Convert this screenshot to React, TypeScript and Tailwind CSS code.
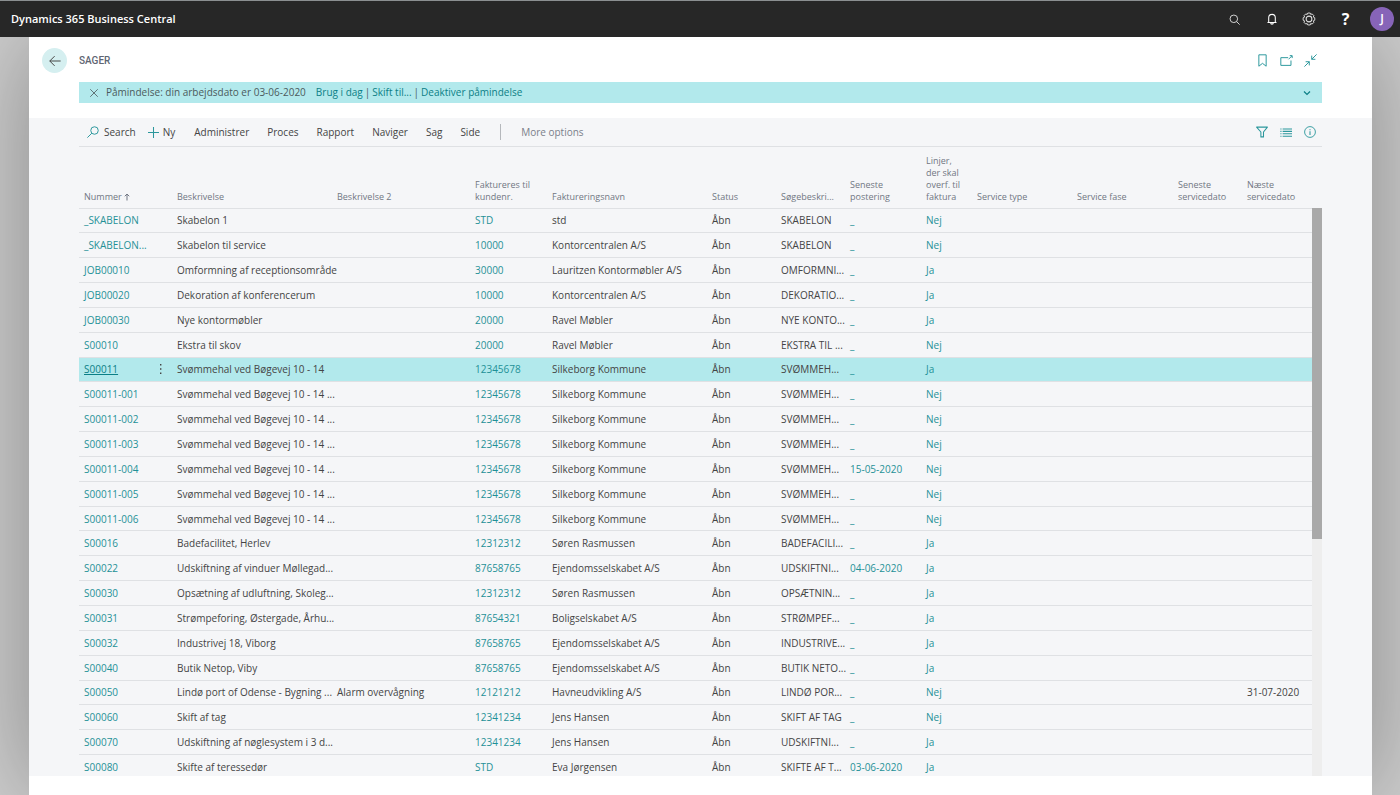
import type { ReactNode } from 'react'

type Row = {
    no: string
    desc: string
    desc2?: string
    customer: string
    name: string
    search: string
    posted?: string
    lines: string
    next?: string
}

const rows: Row[] = [
    { no: '_SKABELON', desc: 'Skabelon 1', customer: 'STD', name: 'std', search: 'SKABELON', lines: 'Nej' },
    { no: '_SKABELON...', desc: 'Skabelon til service', customer: '10000', name: 'Kontorcentralen A/S', search: 'SKABELON', lines: 'Nej' },
    { no: 'JOB00010', desc: 'Omformning af receptionsområde', customer: '30000', name: 'Lauritzen Kontormøbler A/S', search: 'OMFORMNI...', lines: 'Ja' },
    { no: 'JOB00020', desc: 'Dekoration af konferencerum', customer: '10000', name: 'Kontorcentralen A/S', search: 'DEKORATIO...', lines: 'Ja' },
    { no: 'JOB00030', desc: 'Nye kontormøbler', customer: '20000', name: 'Ravel Møbler', search: 'NYE KONTO...', lines: 'Ja' },
    { no: 'S00010', desc: 'Ekstra til skov', customer: '20000', name: 'Ravel Møbler', search: 'EKSTRA TIL ...', lines: 'Nej' },
    { no: 'S00011', desc: 'Svømmehal ved Bøgevej 10 - 14', customer: '12345678', name: 'Silkeborg Kommune', search: 'SVØMMEH...', lines: 'Ja' },
    { no: 'S00011-001', desc: 'Svømmehal ved Bøgevej 10 - 14 ...', customer: '12345678', name: 'Silkeborg Kommune', search: 'SVØMMEH...', lines: 'Nej' },
    { no: 'S00011-002', desc: 'Svømmehal ved Bøgevej 10 - 14 ...', customer: '12345678', name: 'Silkeborg Kommune', search: 'SVØMMEH...', lines: 'Nej' },
    { no: 'S00011-003', desc: 'Svømmehal ved Bøgevej 10 - 14 ...', customer: '12345678', name: 'Silkeborg Kommune', search: 'SVØMMEH...', lines: 'Nej' },
    { no: 'S00011-004', desc: 'Svømmehal ved Bøgevej 10 - 14 ...', customer: '12345678', name: 'Silkeborg Kommune', search: 'SVØMMEH...', posted: '15-05-2020', lines: 'Nej' },
    { no: 'S00011-005', desc: 'Svømmehal ved Bøgevej 10 - 14 ...', customer: '12345678', name: 'Silkeborg Kommune', search: 'SVØMMEH...', lines: 'Nej' },
    { no: 'S00011-006', desc: 'Svømmehal ved Bøgevej 10 - 14 ...', customer: '12345678', name: 'Silkeborg Kommune', search: 'SVØMMEH...', lines: 'Nej' },
    { no: 'S00016', desc: 'Badefacilitet, Herlev', customer: '12312312', name: 'Søren Rasmussen', search: 'BADEFACILI...', lines: 'Ja' },
    { no: 'S00022', desc: 'Udskiftning af vinduer Møllegad...', customer: '87658765', name: 'Ejendomsselskabet A/S', search: 'UDSKIFTNI...', posted: '04-06-2020', lines: 'Ja' },
    { no: 'S00030', desc: 'Opsætning af udluftning, Skoleg...', customer: '12312312', name: 'Søren Rasmussen', search: 'OPSÆTNIN...', lines: 'Ja' },
    { no: 'S00031', desc: 'Strømpeforing, Østergade, Århu...', customer: '87654321', name: 'Boligselskabet A/S', search: 'STRØMPEF...', lines: 'Ja' },
    { no: 'S00032', desc: 'Industrivej 18, Viborg', customer: '87658765', name: 'Ejendomsselskabet A/S', search: 'INDUSTRIVE...', lines: 'Ja' },
    { no: 'S00040', desc: 'Butik Netop, Viby', customer: '87658765', name: 'Ejendomsselskabet A/S', search: 'BUTIK NETO...', lines: 'Ja' },
    { no: 'S00050', desc: 'Lindø port of Odense - Bygning ...', desc2: 'Alarm overvågning', customer: '12121212', name: 'Havneudvikling A/S', search: 'LINDØ POR...', lines: 'Nej', next: '31-07-2020' },
    { no: 'S00060', desc: 'Skift af tag', customer: '12341234', name: 'Jens Hansen', search: 'SKIFT AF TAG', lines: 'Nej' },
    { no: 'S00070', desc: 'Udskiftning af nøglesystem i 3 d...', customer: '12341234', name: 'Jens Hansen', search: 'UDSKIFTNI...', lines: 'Ja' },
    { no: 'S00080', desc: 'Skifte af teressedør', customer: 'STD', name: 'Eva Jørgensen', search: 'SKIFTE AF T...', posted: '03-06-2020', lines: 'Ja' },
]

const selectedNo = 'S00011'

const menu = ['Administrer', 'Proces', 'Rapport', 'Naviger', 'Sag', 'Side']

const Icon = ({ children, className }: { children: ReactNode; className: string }) => (
    <svg viewBox="0 0 16 16" fill="none" stroke="currentColor" className={className} aria-hidden="true">
        {children}
    </svg>
)

const CellLink = ({ children, underline }: { children: ReactNode; underline?: boolean }) => (
    <a href="#" className={underline ? 'text-[#0b7f86] underline' : 'text-[#1f9197]'}>{children}</a>
)

const TopBar = () => (
    <header className="flex h-[37px] shrink-0 items-center justify-between border-t border-[#8b8f91] bg-[#272727] pl-[11px] pr-[6px] text-white">
        <a href="#" className="text-[11px] font-semibold">Dynamics 365 Business Central</a>
        <div className="flex items-center">
            <button type="button" aria-label="Søg" className="flex w-[37px] justify-center text-[#d6d6d6]">
                <Icon className="size-[11px]">
                    <circle cx="7" cy="7" r="5.5" strokeWidth="1.4" />
                    <path d="M11 11 15.5 15.5" strokeWidth="1.4" />
                </Icon>
            </button>
            <button type="button" aria-label="Notifikationer" className="flex w-[37px] justify-center">
                <Icon className="size-3">
                    <path d="M2 12.6h12M3.6 12.4V6.2a4.4 4.4 0 0 1 8.8 0v6.2M6.2 13c0 2.4 3.6 2.4 3.6 0" strokeWidth="1.4" />
                </Icon>
            </button>
            <button type="button" aria-label="Indstillinger" className="flex w-[37px] justify-center text-[#e0e0e0]">
                <Icon className="size-[14px]">
                    <path d="M6.600 1.200h2.800l.6 1.600 1.600-.6 2 2-.7 1.600 1.700.8v2.800l-1.700.7.7 1.700-2 2-1.600-.7-.6 1.700H6.600l-.7-1.700-1.600.7-2-2 .7-1.700-1.700-.7V6.600L3 5.800l-.7-1.600 2-2 1.600.6z" strokeLinejoin="round" strokeWidth="1.100" />
                    <circle cx="8" cy="8" r="3.300" strokeWidth="1.200" />
                </Icon>
            </button>
            <button type="button" aria-label="Hjælp" className="w-[37px] text-center text-base font-bold">?</button>
            <button type="button" aria-label="Konto" className="ml-[6px] size-6 rounded-full bg-[#8764b8] text-xs font-semibold">J</button>
        </div>
    </header>
)

const PageHeader = () => (
    <div className="flex items-center justify-between pl-[13px] pr-[55px] pt-[11px]">
        <div className="flex items-center gap-3">
            <button type="button" aria-label="Tilbage" className="flex size-[25px] items-center justify-center rounded-full bg-[#d5eff0] text-[#444]">
                <Icon className="size-3">
                    <path d="M15.500 8H1M7.500 1.500 1 8l6.500 6.500" strokeWidth="1.300" />
                </Icon>
            </button>
            <h1 className="font-['Roboto',sans-serif] text-[10px] font-medium text-[#5f6673]">SAGER</h1>
        </div>
        <div className="flex items-center gap-[11px] text-[#2b979c]">
            <button type="button" aria-label="Bogmærke">
                <Icon className="size-[13px]">
                    <path d="M3.500 1h9v14L8 11.500 3.500 15z" strokeWidth="1.200" />
                </Icon>
            </button>
            <button type="button" aria-label="Åbn i nyt vindue">
                <Icon className="size-[13px]">
                    <path d="M10 4.500H1v9.500h12.500V8M10.500 6.500l4-4M12 2h3v3" strokeWidth="1.200" />
                </Icon>
            </button>
            <button type="button" aria-label="Formindsk">
                <Icon className="size-[13px]">
                    <path d="M15.500.5 9.500 6.500M9.500 2v4.500H14M.5 15.500l6-6M2 9.500h4.500V14" strokeWidth="1.200" />
                </Icon>
            </button>
        </div>
    </div>
)

const Reminder = () => (
    <div className="mx-[50px] mt-[9px] flex h-[21px] items-center bg-[#b2e9ec] pl-[10px] pr-[11px] text-[10px] text-[#4b5a5c]">
        <button type="button" aria-label="Luk">
            <Icon className="size-[10px]">
                <path d="m2 2 12 12M14 2 2 14" strokeWidth="1.300" />
            </Icon>
        </button>
        <p className="ml-[7px]">Påmindelse: din arbejdsdato er 03-06-2020</p>
        <div className="ml-[10px] flex gap-[2px]">
            <a href="#" className="text-[#0b7f86]">Brug i dag</a>
            <span>|</span>
            <a href="#" className="text-[#0b7f86]">Skift til...</a>
            <span>|</span>
            <a href="#" className="text-[#0b7f86]">Deaktiver påmindelse</a>
        </div>
        <button type="button" aria-label="Vis flere" className="ml-auto text-[#0b7f86]">
            <Icon className="size-2">
                <path d="m2 5 6 6 6-6" strokeWidth="2.400" />
            </Icon>
        </button>
    </div>
)

const ActionBar = () => (
    <nav className="flex h-[29px] shrink-0 items-center border-b border-[#dfe1e4] pl-2 pr-[6px] text-[10px] text-[#444]">
        <button type="button" className="flex items-center gap-[5px]">
            <Icon className="size-3 text-[#2b979c]">
                <circle cx="10" cy="6" r="5" strokeWidth="1.300" />
                <path d="M6.500 9.500.5 15.500" strokeWidth="1.300" />
            </Icon>
            Search
        </button>
        <button type="button" className="ml-3 flex items-center gap-1">
            <Icon className="size-[11px] text-[#2b979c]">
                <path d="M8 0v16M0 8h16" strokeWidth="1.500" />
            </Icon>
            Ny
        </button>
        <div className="ml-[19px] flex gap-[18px]">
            {menu.map((item) => (
                <button key={item} type="button">{item}</button>
            ))}
        </div>
        <div className="ml-5 h-4 border-l border-[#b5b8bc]" />
        <button type="button" className="ml-5 text-[#7a808a]">More options</button>
        <div className="ml-auto flex items-center gap-3 text-[#2b979c]">
            <button type="button" aria-label="Filter">
                <Icon className="size-3">
                    <path d="M.800 1.500h14.400L10 8v6.500H6.500V8z" strokeLinejoin="round" strokeWidth="1.400" />
                </Icon>
            </button>
            <button type="button" aria-label="Vis som liste">
                <Icon className="size-3">
                    <path d="M3.500 4H16M3.500 7.200H16M3.500 10.400H16M3.500 13.600H16M.5 4H2M.5 7.200H2M.5 10.400H2M.5 13.600H2" strokeWidth="1.500" />
                </Icon>
            </button>
            <button type="button" aria-label="Oplysninger">
                <Icon className="size-3">
                    <circle cx="8" cy="8" r="7.200" strokeWidth="1.200" />
                    <path d="M8 7v5M8 4.200v1.400" strokeWidth="1.400" />
                </Icon>
            </button>
        </div>
    </nav>
)

const JobTable = () => (
    <table className="h-[calc(100%+4px)] w-full table-fixed text-left text-[10px] leading-3">
        <colgroup>
            <col className="w-[71px]" />
            <col className="w-[22px]" />
            <col className="w-[160px]" />
            <col className="w-[138px]" />
            <col className="w-[77px]" />
            <col className="w-[160px]" />
            <col className="w-[69px]" />
            <col className="w-[69px]" />
            <col className="w-[76px]" />
            <col className="w-[51px]" />
            <col className="w-[100px]" />
            <col className="w-[101px]" />
            <col className="w-[69px]" />
            <col className="w-[70px]" />
        </colgroup>
        <thead>
            <tr className="h-[61px] border-b border-[#dfe1e4] align-bottom text-[9px] whitespace-nowrap text-[#717783] *:px-[5px] *:pb-[5px] *:font-normal">
                <th scope="col" aria-sort="ascending">
                    <span className="flex items-center gap-px">
                        Nummer
                        <Icon className="size-2">
                            <path d="M8 15V2M3.500 6.500 8 2l4.500 4.500" strokeWidth="2" />
                        </Icon>
                    </span>
                </th>
                <th scope="col" aria-label="Handlinger" />
                <th scope="col">Beskrivelse</th>
                <th scope="col">Beskrivelse 2</th>
                <th scope="col">Faktureres til<br />kundenr.</th>
                <th scope="col">Faktureringsnavn</th>
                <th scope="col">Status</th>
                <th scope="col">Søgebeskri...</th>
                <th scope="col">Seneste<br />postering</th>
                <th scope="col">Linjer,<br />der skal<br />overf. til<br />faktura</th>
                <th scope="col">Service type</th>
                <th scope="col">Service fase</th>
                <th scope="col">Seneste<br />servicedato</th>
                <th scope="col">Næste<br />servicedato</th>
            </tr>
        </thead>
        <tbody className="whitespace-nowrap text-[#444]">
            {rows.map((row) => {
                const selected = row.no === selectedNo
                return (
                    <tr key={row.no} className={selected ? 'border-b border-[#dfe1e4] bg-[#b2e9ec] *:pl-[5px]' : 'border-b border-[#dfe1e4] *:pl-[5px]'}>
                        <td><CellLink underline={selected}>{row.no}</CellLink></td>
                        <td>
                            {selected && (
                                <button type="button" aria-label="Vis flere handlinger" className="flex w-3 justify-center">
                                    <svg viewBox="0 0 2 12" fill="currentColor" className="h-3 w-[2px]" aria-hidden="true">
                                        <path d="M0 1h1.400v1.400H0zM0 5.300h1.400v1.400H0zM0 9.600h1.400V11H0z" />
                                    </svg>
                                </button>
                            )}
                        </td>
                        <td>{row.desc}</td>
                        <td>{row.desc2}</td>
                        <td><CellLink>{row.customer}</CellLink></td>
                        <td>{row.name}</td>
                        <td>Åbn</td>
                        <td>{row.search}</td>
                        <td><CellLink>{row.posted ?? '_'}</CellLink></td>
                        <td><CellLink>{row.lines}</CellLink></td>
                        <td />
                        <td />
                        <td />
                        <td>{row.next}</td>
                    </tr>
                )
            })}
        </tbody>
    </table>
)

const App = () => (
    <div className="flex h-screen flex-col overflow-hidden font-['Open_Sans','Noto_Sans',sans-serif]">
        <TopBar />
        <div className="flex min-h-0 flex-1 overflow-hidden bg-[#cfcfcf]">
            <main className="ml-[29px] mr-[28px] flex min-w-0 flex-1 flex-col bg-white pb-[19px] shadow-[0_0_100px_rgba(0,0,0,0.35)]">
                <PageHeader />
                <Reminder />
                <section className="mt-[15px] flex min-h-0 flex-1 flex-col bg-[#f5f6f8] px-[50px]">
                    <ActionBar />
                    <div className="flex min-h-0 flex-1 overflow-hidden">
                        <div className="min-w-0 flex-1">
                            <JobTable />
                        </div>
                        <div className="w-[10px] pt-[61px]">
                            <div className="h-full bg-[#eeeeee]">
                                <div className="h-7/12 bg-[#a9a9a9]" />
                            </div>
                        </div>
                    </div>
                </section>
            </main>
        </div>
    </div>
)

export default App
